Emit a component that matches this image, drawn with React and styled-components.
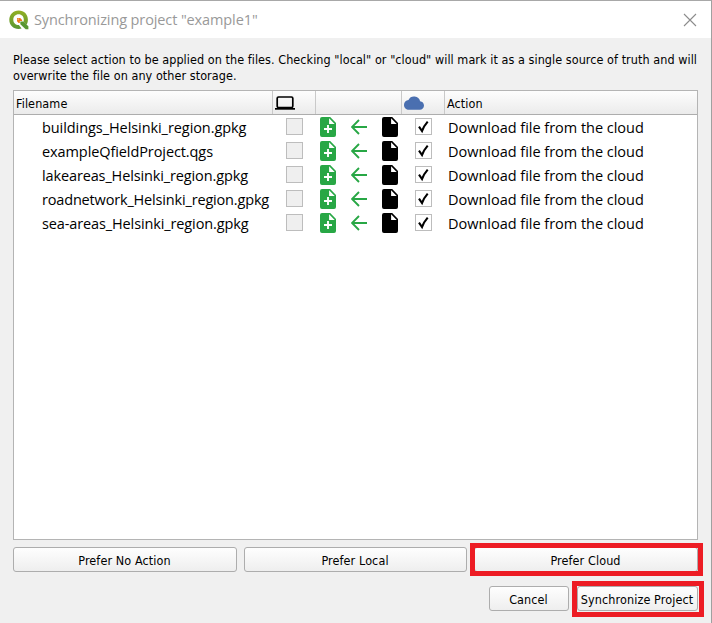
import React from "react";
import styled, { createGlobalStyle, css } from "styled-components";

const GlobalStyle = createGlobalStyle`
  html, body { margin: 0; padding: 0; }
  *, *::before, *::after { box-sizing: border-box; }
`;

const uiFont = css`
  font-family: "DejaVu Sans Condensed", "DejaVu Sans", sans-serif;
  font-stretch: condensed;
  font-size: 12.5px;
  letter-spacing: 0.1px;
  color: #000;
`;

const listFont = css`
  font-family: "Open Sans", "Noto Sans", sans-serif;
  font-size: 14.5px;
`;

const Dialog = styled.main`
  display: flex;
  flex-direction: column;
  width: 712px;
  height: 623px;
  overflow: hidden;
  background: #f0f0f0;
  border-top: 1px solid #a8a8a8;
  border-right: 1px solid #a0a0a0;
`;

const TitleBar = styled.header`
  display: flex;
  align-items: center;
  flex: none;
  height: 37px;
  padding: 0 14px 0 9px;
  background: #fff;
`;

const Title = styled.h1`
  ${listFont}
  flex: 1;
  margin: 0 0 0 5px;
  font-weight: 400;
  letter-spacing: -0.11px;
  line-height: 20px;
  color: #999;
  white-space: nowrap;
`;

const CloseButton = styled.button`
  display: flex;
  padding: 0;
  border: 0;
  background: none;
`;

const Message = styled.p`
  ${uiFont}
  flex: none;
  height: 52px;
  margin: 0;
  padding: 14px 0 0 13px;
  letter-spacing: 0.056px;
  line-height: 16px;
  white-space: pre-line;
`;

const FileTable = styled.section`
  flex: none;
  width: 685px;
  height: 450px;
  margin-left: 13px;
  border: 1px solid #b4b4b4;
  background: #fff;
`;

const columns = css`
  display: grid;
  grid-template-columns: 259px 43px 86px 43px 1fr;
`;

const HeaderRow = styled.div`
  ${columns}
  height: 24px;
  border-bottom: 1px solid #adadad;
  background: linear-gradient(#fdfdfd, #ebebeb);
`;

const HeaderCell = styled.div`
  ${uiFont}
  display: flex;
  align-items: center;
  padding: 1px 0 0 2px;
  border-right: 1px solid #c9c9c9;
  &:last-child { border-right: 0; }
`;

const FileRow = styled.div`
  ${columns}
  ${listFont}
  height: 24px;
  line-height: 26px;
  white-space: nowrap;
  color: #000;
`;

const FileName = styled.span`
  padding-left: 28px;
  letter-spacing: ${(p) => p.$tracking}px;
`;

const CheckCell = styled.span`
  display: flex;
  align-items: flex-start;
  padding: 3px 0 0 13px;
`;

const CheckBox = styled.span`
  display: flex;
  width: 17px;
  height: 17px;
  border: 1px solid #bdbdbd;
  background: ${(p) => (p.$checked ? "#fff" : "#efefef")};
`;

const DirectionCell = styled.span`
  display: flex;
  align-items: flex-start;
  gap: 15px;
  padding: 2px 0 0 4px;
`;

const ActionText = styled.span`
  padding-left: 3px;
  letter-spacing: -0.02px;
`;

const PreferBar = styled.div`
  display: grid;
  grid-template-columns: 224px 223px 224px;
  column-gap: 7px;
  flex: none;
  margin: 7px 0 0 13px;
`;

const DialogBar = styled.footer`
  display: flex;
  justify-content: flex-end;
  gap: 8px;
  flex: none;
  margin: 14px 13px 0 0;
`;

const Button = styled.button`
  ${uiFont}
  position: relative;
  width: ${(p) => p.$width || "100%"};
  height: 25px;
  padding: 1px 1px 0 0;
  border: 1px solid #adadad;
  border-radius: 3px;
  background: linear-gradient(#fefefe, #eeeeee);
  white-space: nowrap;
`;

const Highlight = styled.span`
  position: absolute;
  inset: ${(p) => p.$inset};
  border: 5px solid #ed1c24;
  pointer-events: none;
`;

const QgisLogo = () => (
  <svg width="20" height="20" viewBox="0 0 20 20">
    <defs>
      <linearGradient id="leaf" x1="0" y1="0" x2="0" y2="1">
        <stop offset="0" stopColor="#93b023" />
        <stop offset="1" stopColor="#589632" />
      </linearGradient>
    </defs>
    <path
      fill="url(#leaf)"
      fillRule="evenodd"
      d="M9.7 .4C4.2 .4 .3 4.500 .3 9.700S4.200 19 9.600 19c1.100 0 2.100-.2 3-.5L9.900 15C6.500 15 4.300 12.800 4.300 9.700S6.500 4.300 9.600 4.300s5.200 2.300 5.200 5.400c0 .8-.1 1.500-.4 2.100l3 2.900c1-1.400 1.500-3.100 1.500-5C18.900 4.300 15.100 .4 9.700 .4Z"
    />
    <path fill="#589632" d="M11.300 11.500h2.900l5.200 4.800v2.900h-2.700l-5.400-5Z" />
    <path fill="#ee7913" d="M8 8h3.200l1.900 1.900v1.200h-2.300v1.900H9.700L8 11.300Z" />
    <path fill="#f4b183" d="M8.500 8.500h1.900l-1.300 1.900-.6-.5Z" />
  </svg>
);

const CloseIcon = () => (
  <svg width="14" height="14" viewBox="0 0 14 14">
    <path d="M1 1 13 13M13 1 1 13" stroke="#8c8c8c" strokeWidth="1.1" fill="none" />
  </svg>
);

const LaptopIcon = () => (
  <svg width="20" height="14" viewBox="0 0 20 14">
    <rect x="2.2" y="1" width="15.600" height="10.600" rx="1.300" fill="none" stroke="#000" strokeWidth="1.700" />
    <path d="M0 12h20v1.700H0Z" fill="#000" />
  </svg>
);

const CloudIcon = () => (
  <svg width="20" height="14" viewBox="0 0 20 14">
    <path
      fill="#4a6fb0"
      d="M16.100 5.200A6.200 6.200 0 0 0 4.500 3.900 4.900 4.900 0 0 0 0 8.900C0 11.700 2.200 13.800 5 13.800h10.800c2.300 0 4.200-1.900 4.200-4.300 0-2.300-1.700-4.100-3.900-4.300Z"
    />
  </svg>
);

const FileIcon = ({ color, plus }) => (
  <svg width="16" height="20" viewBox="0 0 16 20">
    <path
      fill={color}
      fillRule="evenodd"
      d="M2 0h8.200L16 5.900V18a2 2 0 0 1-2 2H2a2 2 0 0 1-2-2V2a2 2 0 0 1 2-2Zm7.100 1.300v5.700h5.600Z"
    />
    {plus && <path d="M8 8v8M4 12h8" stroke="#fff" strokeWidth="1.900" />}
  </svg>
);

const ArrowIcon = () => (
  <svg width="16" height="20" viewBox="0 0 16 20">
    <path d="M8 3 1 10l7 7M1 10h15" fill="none" stroke="#28a745" strokeWidth="1.900" />
  </svg>
);

const CheckIcon = () => (
  <svg width="15" height="15" viewBox="0 0 15 15">
    <path d="M3 7.700 6 12Q8 6.800 11.700 2.600" fill="none" stroke="#000" strokeWidth="2.100" />
  </svg>
);

const files = [
  { name: "buildings_Helsinki_region.gpkg", tracking: -0.07 },
  { name: "exampleQfieldProject.qgs", tracking: -0.09 },
  { name: "lakeareas_Helsinki_region.gpkg", tracking: -0.13 },
  { name: "roadnetwork_Helsinki_region.gpkg", tracking: -0.17 },
  { name: "sea-areas_Helsinki_region.gpkg", tracking: -0.12 },
];

export default function App() {
  return (
    <>
      <GlobalStyle />
      <Dialog>
        <TitleBar>
          <QgisLogo />
          <Title>Synchronizing project "example1"</Title>
          <CloseButton aria-label="Close"><CloseIcon /></CloseButton>
        </TitleBar>
        <Message>
          {'Please select action to be applied on the files. Checking "local" or "cloud" will mark it as a single source of truth and will\noverwrite the file on any other storage.'}
        </Message>
        <FileTable>
          <HeaderRow>
            <HeaderCell>Filename</HeaderCell>
            <HeaderCell><LaptopIcon /></HeaderCell>
            <HeaderCell />
            <HeaderCell><CloudIcon /></HeaderCell>
            <HeaderCell>Action</HeaderCell>
          </HeaderRow>
          {files.map((file) => (
            <FileRow key={file.name}>
              <FileName $tracking={file.tracking}>{file.name}</FileName>
              <CheckCell><CheckBox /></CheckCell>
              <DirectionCell>
                <FileIcon color="#28a745" plus />
                <ArrowIcon />
                <FileIcon color="#000" />
              </DirectionCell>
              <CheckCell><CheckBox $checked><CheckIcon /></CheckBox></CheckCell>
              <ActionText>Download file from the cloud</ActionText>
            </FileRow>
          ))}
        </FileTable>
        <PreferBar>
          <Button>Prefer No Action</Button>
          <Button>Prefer Local</Button>
          <Button>Prefer Cloud<Highlight $inset="-5px -6px -5px -5px" /></Button>
        </PreferBar>
        <DialogBar>
          <Button $width="80px">Cancel</Button>
          <Button $width="121px">Synchronize Project<Highlight $inset="-6px -7px -7px -6px" /></Button>
        </DialogBar>
      </Dialog>
    </>
  );
}
